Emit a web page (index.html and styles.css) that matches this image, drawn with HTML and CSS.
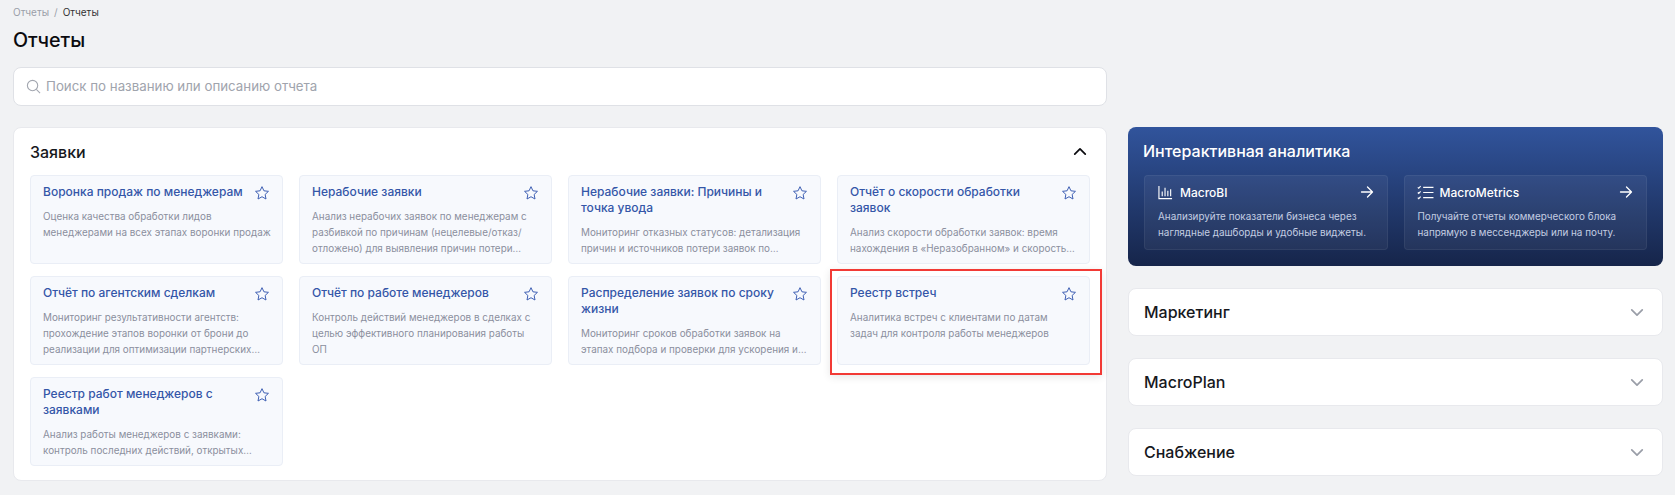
FILE: index.html
```html
<!DOCTYPE html>
<html lang="ru">
<head>
    <meta charset="UTF-8">
    <title>Отчеты</title>
    <link rel="stylesheet" href="styles.css">
</head>
<body>
    <svg class="sprite" width="0" height="0">
        <symbol id="star" viewBox="0 0 24 24">
            <path d="M12 2.500l2.900 6.200 6.800.8-5 4.700 1.300 6.800-6-3.400-6 3.400 1.300-6.800-5-4.700 6.800-.8z" fill="none" stroke="currentColor" stroke-width="1.500" stroke-linejoin="round"/>
        </symbol>
        <symbol id="chevron" viewBox="0 0 16 10">
            <path d="M2 2l6 6 6-6" fill="none" stroke="currentColor" stroke-width="2" stroke-linecap="round" stroke-linejoin="round"/>
        </symbol>
        <symbol id="arrow" viewBox="0 0 14 14">
            <path d="M1.500 7h11M7.500 2l5 5-5 5" fill="none" stroke="currentColor" stroke-width="1.300" stroke-linecap="round" stroke-linejoin="round"/>
        </symbol>
    </svg>

    <div class="breadcrumbs"><span>Отчеты</span><span class="sep">/</span><span class="current">Отчеты</span></div>
    <h1>Отчеты</h1>

    <div class="layout">
        <div class="main">
            <div class="search">
                <svg class="search-icon" viewBox="0 0 16 16"><circle cx="7" cy="7" r="5.500"/><path d="M11 11l4 4"/></svg>
                <input type="text" placeholder="Поиск по названию или описанию отчета">
            </div>

            <section class="panel">
                <div class="panel-head">
                    <h2>Заявки</h2>
                    <svg class="chevron-up"><use href="#chevron"/></svg>
                </div>
                <div class="cards">
                    <div class="card">
                        <div class="card-head"><h3>Воронка продаж по менеджерам</h3><svg class="star"><use href="#star"/></svg></div>
                        <p class="lines-3">Оценка качества обработки лидов менеджерами на всех этапах воронки продаж</p>
                    </div>
                    <div class="card">
                        <div class="card-head"><h3>Нерабочие заявки</h3><svg class="star"><use href="#star"/></svg></div>
                        <p class="lines-3">Анализ нерабочих заявок по менеджерам с разбивкой по причинам (нецелевые/отказ/отложено) для выявления причин потери потенциальных клиентов</p>
                    </div>
                    <div class="card">
                        <div class="card-head"><h3>Нерабочие заявки: Причины и точка увода</h3><svg class="star"><use href="#star"/></svg></div>
                        <p class="lines-2">Мониторинг отказных статусов: детализация причин и источников потери заявок по менеджерам</p>
                    </div>
                    <div class="card">
                        <div class="card-head"><h3>Отчёт о скорости обработки заявок</h3><svg class="star"><use href="#star"/></svg></div>
                        <p class="lines-2">Анализ скорости обработки заявок: время нахождения в «Неразобранном» и скорость реакции менеджеров</p>
                    </div>
                    <div class="card">
                        <div class="card-head"><h3>Отчёт по агентским сделкам</h3><svg class="star"><use href="#star"/></svg></div>
                        <p class="lines-3">Мониторинг результативности агентств: прохождение этапов воронки от брони до реализации для оптимизации партнерских продаж и каналов</p>
                    </div>
                    <div class="card">
                        <div class="card-head"><h3>Отчёт по работе менеджеров</h3><svg class="star"><use href="#star"/></svg></div>
                        <p class="lines-3">Контроль действий менеджеров в сделках с целью эффективного планирования работы ОП</p>
                    </div>
                    <div class="card">
                        <div class="card-head"><h3>Распределение заявок по сроку жизни</h3><svg class="star"><use href="#star"/></svg></div>
                        <p class="lines-2">Мониторинг сроков обработки заявок на этапах подбора и проверки для ускорения и контроля</p>
                    </div>
                    <div class="card">
                        <div class="card-head"><h3>Реестр встреч</h3><svg class="star"><use href="#star"/></svg></div>
                        <p class="lines-3">Аналитика встреч с клиентами по датам задач для контроля работы менеджеров</p>
                        <div class="mark"></div>
                    </div>
                    <div class="card">
                        <div class="card-head"><h3>Реестр работ менеджеров с заявками</h3><svg class="star"><use href="#star"/></svg></div>
                        <p class="lines-2">Анализ работы менеджеров с заявками: контроль последних действий, открытых обращений и сделок</p>
                    </div>
                </div>
            </section>
        </div>

        <aside class="side">
            <section class="promo">
                <h2>Интерактивная аналитика</h2>
                <div class="promo-links">
                    <div class="promo-link">
                        <div class="promo-head">
                            <svg class="promo-icon" viewBox="0 0 16 16"><path d="M1 1v13.500h14M4.500 7v5M7.500 3v9M10.500 6v6M13.500 4.500v7.500"/></svg>
                            <span>MacroBI</span>
                            <svg class="arrow"><use href="#arrow"/></svg>
                        </div>
                        <p>Анализируйте показатели бизнеса через наглядные дашборды и удобные виджеты.</p>
                    </div>
                    <div class="promo-link">
                        <div class="promo-head">
                            <svg class="promo-icon promo-icon-wide" viewBox="0 0 18 16"><path d="M6.500 2.500h11M6.500 8h11M6.500 13.500h11M.8 2.500l1 1 2-2.200M.8 8l1 1 2-2.200M.8 13.500l1 1 2-2.200"/></svg>
                            <span>MacroMetrics</span>
                            <svg class="arrow"><use href="#arrow"/></svg>
                        </div>
                        <p>Получайте отчеты коммерческого блока напрямую в мессенджеры или на почту.</p>
                    </div>
                </div>
            </section>

            <div class="fold"><h2>Маркетинг</h2><svg class="chevron-down"><use href="#chevron"/></svg></div>
            <div class="fold"><h2>MacroPlan</h2><svg class="chevron-down"><use href="#chevron"/></svg></div>
            <div class="fold"><h2>Снабжение</h2><svg class="chevron-down"><use href="#chevron"/></svg></div>
        </aside>
    </div>
</body>
</html>
```

FILE: styles.css
```css
* {
    box-sizing: border-box;
}
body {
    margin: 0;
    padding: 5px 12px 0 13px;
    height: 495px;
    overflow: hidden;
    background: #f1f2f4;
    font-family: Inter, "Noto Sans", sans-serif;
    color: #16181d;
}
h1, h2, h3, p {
    margin: 0;
}
.sprite {
    position: absolute;
}
.breadcrumbs {
    display: flex;
    gap: 5px;
    font-size: 10px;
    line-height: 14px;
    color: #9a9ea8;
}
.breadcrumbs .current {
    color: #333;
}
h1 {
    margin-top: 7px;
    font-size: 19.700px;
    line-height: 28px;
    font-weight: 500;
    color: #0b0b0f;
}
.layout {
    display: grid;
    grid-template-columns: 1fr 535px;
    column-gap: 21px;
    margin-top: 13px;
}
.main {
    min-width: 0;
}
.search {
    display: flex;
    align-items: center;
    gap: 5px;
    height: 39px;
    padding: 0 12px;
    margin-bottom: 21px;
    background: #fff;
    border: 1px solid #dfe1e6;
    border-radius: 8px;
}
.search-icon {
    width: 15px;
    height: 15px;
    fill: none;
    stroke: #a3a7b0;
    stroke-width: 1.200;
    flex: none;
}
.search input {
    flex: 1;
    border: none;
    outline: none;
    background: none;
    padding: 0 0 1px;
    font: 13.300px Inter, sans-serif;
}
.search input::placeholder {
    color: #a0a4ad;
    opacity: 1;
}
.panel {
    background: #fff;
    border: 1px solid #e8e9ed;
    border-radius: 8px;
    padding: 0 16px 14px;
}
.panel-head {
    display: flex;
    align-items: center;
    justify-content: space-between;
    height: 47px;
    padding-right: 3px;
}
.panel-head h2, .fold h2 {
    font-size: 16px;
    line-height: 20px;
    font-weight: 500;
}
.chevron-up {
    width: 14px;
    height: 9px;
    transform: rotate(180deg);
    color: #0b0b0f;
}
.cards {
    display: grid;
    grid-template-columns: repeat(4, 1fr);
    gap: 12px 16px;
}
.card {
    position: relative;
    padding: 8px 12px 7px;
    background: #f7f9fd;
    border: 1px solid #eaeef6;
    border-radius: 4px;
}
.card-head {
    display: flex;
    align-items: flex-start;
    justify-content: space-between;
    gap: 8px;
    margin-bottom: 8px;
}
.card h3 {
    font-size: 12px;
    line-height: 16px;
    font-weight: 500;
    color: #3456a8;
}
.star {
    width: 16px;
    height: 16px;
    flex: none;
    margin: 1px 0 -1px;
    color: #3f60b4;
}
.card p {
    margin-right: -1px;
    font-size: 9.900px;
    line-height: 16px;
    color: #8b8f9e;
    display: -webkit-box;
    -webkit-box-orient: vertical;
    overflow: hidden;
}
.card .lines-3 {
    -webkit-line-clamp: 3;
}
.card .lines-2 {
    -webkit-line-clamp: 2;
}
/* red frame drawn over the card */
.mark {
    position: absolute;
    top: -8px;
    left: -8px;
    right: -13px;
    bottom: -11px;
    border: 2px solid #f23a35;
    box-shadow: 0 2px 8px rgba(0,0,0,0.1);
}
.side {
    display: flex;
    flex-direction: column;
    gap: 22px;
    margin-top: 60px;
}
.promo {
    height: 139px;
    padding: 0 16px;
    background: linear-gradient(180deg, #31549c 0%, #16254a 100%);
    border-radius: 8px;
}
.promo h2 {
    padding-top: 14px;
    margin: 0 0 13px -1px;
    font-size: 16px;
    line-height: 21px;
    font-weight: 500;
    color: #fff;
}
.promo-links {
    display: grid;
    grid-template-columns: 1fr 1fr;
    gap: 16px;
}
.promo-link {
    height: 75px;
    padding: 8px 13px;
    background: rgba(255,255,255,0.05);
    border: 1px solid rgba(255,255,255,0.06);
    border-radius: 4px;
}
.promo-head {
    display: flex;
    align-items: center;
    gap: 7px;
    height: 16px;
    margin-bottom: 8px;
    font-size: 12px;
    font-weight: 500;
    color: #fff;
}
.promo-icon {
    width: 15px;
    height: 15px;
    fill: none;
    stroke: #fff;
    stroke-width: 1.200;
    flex: none;
}
.promo-icon-wide {
    width: 17px;
    margin: 0 -1px;
}
.arrow {
    width: 14px;
    height: 14px;
    margin-left: auto;
    color: #fff;
}
.promo-link p {
    font-size: 9.900px;
    line-height: 16px;
    color: #c3cde2;
}
.fold {
    display: flex;
    align-items: center;
    justify-content: space-between;
    height: 48px;
    padding: 0 18px 0 15px;
    background: #fff;
    border: 1px solid #e8e9ed;
    border-radius: 8px;
}
.chevron-down {
    width: 14px;
    height: 9px;
    color: #9a9ea8;
}
```
